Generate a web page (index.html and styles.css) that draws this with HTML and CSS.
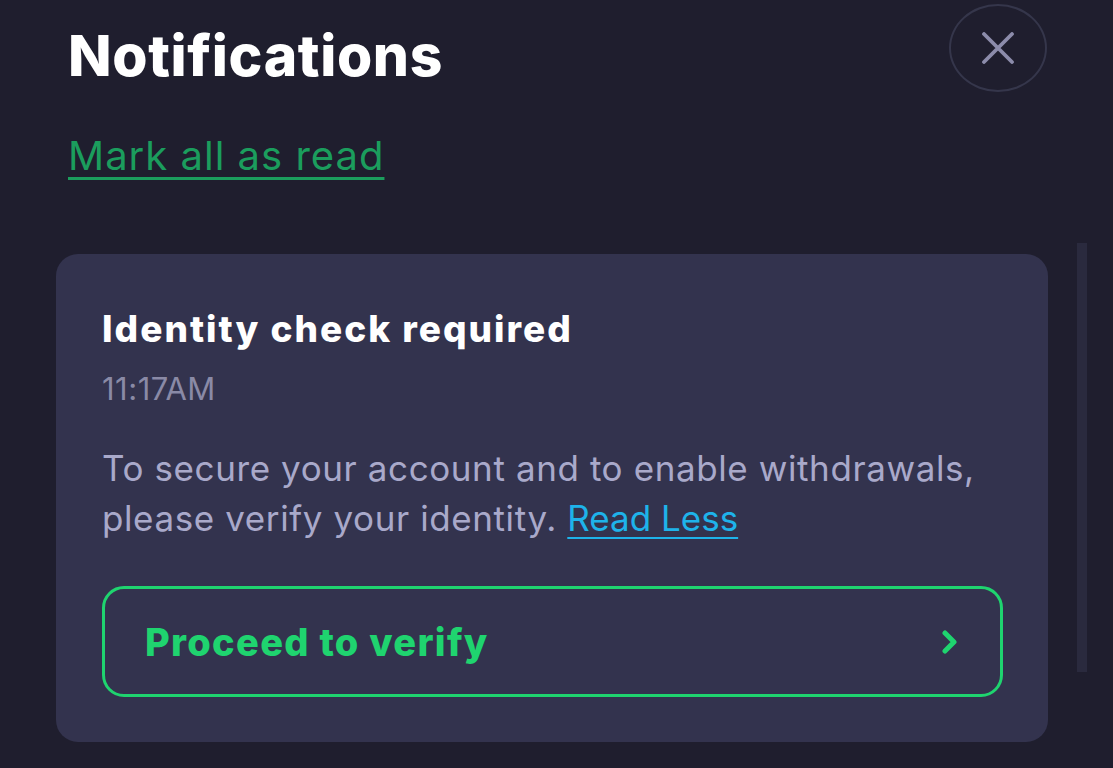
FILE: index.html
```html
<!DOCTYPE html>
<html lang="en">
<head>
<meta charset="utf-8">
<title>Notifications</title>
<link rel="stylesheet" href="styles.css">
</head>
<body>
<div class="page">
  <header class="header">
    <h1 class="title">Notifications</h1>
    <button class="close" aria-label="Close">
      <svg width="34" height="32" viewBox="0 0 34 32"><path d="M3 2 L31 30 M31 2 L3 30" stroke="#8c8cab" stroke-width="3.8" stroke-linecap="round" fill="none"/></svg>
    </button>
  </header>
  <a class="mark" href="#">Mark all as read</a>
  <div class="list">
    <article class="card">
      <h2 class="card-title">Identity check required</h2>
      <div class="time">11:17AM</div>
      <p class="body">To secure your account and to enable withdrawals, please verify your identity. <a class="less" href="#">Read Less</a></p>
      <a class="btn" href="#">
        <span>Proceed to verify</span>
        <svg width="16" height="24" viewBox="0 0 16 24"><path d="M3 3 L12 12 L3 21" stroke="#1fd46f" stroke-width="5" stroke-linecap="round" stroke-linejoin="round" fill="none"/></svg>
      </a>
    </article>
    <div class="scrollbar"></div>
  </div>
</div>
</body>
</html>
```
FILE: styles.css
```css
html, body {
  margin: 0;
  padding: 0;
  background: #1f1e2e;
  height: 100%;
  overflow: hidden;
}
body {
  font-family: Inter, "Noto Sans", sans-serif;
  color: #ffffff;
}
.page {
  padding: 0 0 0 56px;
}
.header {
  display: flex;
  justify-content: space-between;
  align-items: flex-start;
  height: 110px;
}
.title {
  margin: 24px 0 0 12px;
  font-size: 57px;
  font-weight: 800;
  line-height: 64px;
  letter-spacing: 0.6px;
}
.close {
  width: 98px;
  height: 88px;
  margin: 4px 66px 0 0;
  border: 2px solid #35364b;
  border-radius: 50%;
  background: transparent;
  display: flex;
  align-items: center;
  justify-content: center;
  padding: 0;
}
.mark {
  display: inline-block;
  margin-left: 12px;
  margin-top: 22px;
  color: #1b9d5d;
  font-size: 40px;
  line-height: 48px;
  letter-spacing: 1px;
  text-decoration: underline;
  text-decoration-thickness: 3px;
  text-underline-offset: 7px;
}
.list {
  position: relative;
  margin-top: 74px;
  margin-right: 65px;
}
.card {
  background: #33334e;
  border-radius: 22px;
  padding: 51px 45px 45px 46px;
}
.card-title {
  margin: 0;
  font-size: 37px;
  font-weight: 800;
  line-height: 48px;
  letter-spacing: 2px;
}
.time {
  margin-top: 16px;
  color: #8a8aa6;
  font-size: 31px;
  line-height: 40px;
  letter-spacing: 0.5px;
}
.body {
  margin: 34px 0 0;
  color: #a9a9ca;
  font-size: 35px;
  line-height: 50px;
  letter-spacing: 0.6px;
}
.less {
  color: #1eb3ea;
  letter-spacing: 0;
  text-decoration: underline;
  text-decoration-thickness: 2px;
  text-underline-offset: 6px;
}
.btn {
  margin-top: 43px;
  display: flex;
  align-items: center;
  justify-content: space-between;
  height: 111px;
  box-sizing: border-box;
  border: 3px solid #1fd46f;
  border-radius: 22px;
  padding: 0 42px 0 40px;
  color: #1fd46f;
  font-size: 38px;
  font-weight: 800;
  letter-spacing: 1.3px;
  text-decoration: none;
}
.scrollbar {
  position: absolute;
  top: -11px;
  right: -39px;
  width: 10px;
  height: 429px;
  background: #2a2a3e;
}
```
